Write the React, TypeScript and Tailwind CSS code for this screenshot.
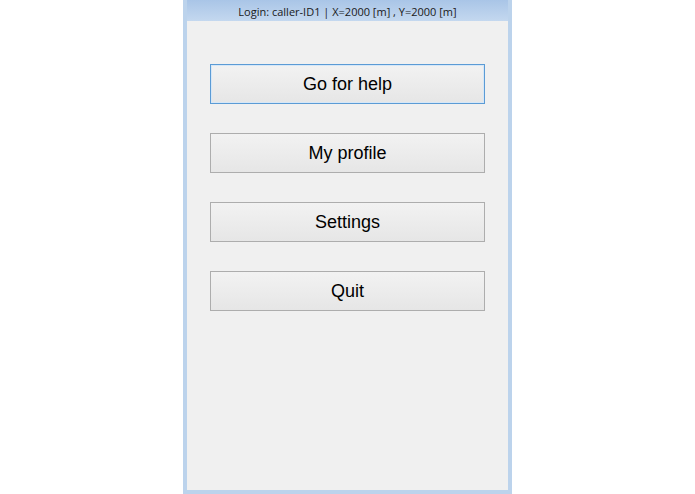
import React from 'react';

const MenuButton: React.FC<{ label: string; focused?: boolean }> = ({ label, focused }) => (
  <button
    className={`h-[40px] w-full border bg-gradient-to-b from-[#f2f2f2] to-[#e6e6e6] text-[18px] text-black ${
      focused ? 'border-[#5b9bd5] shadow-[inset_0_0_0_1px_#d6e7f7]' : 'border-[#adadad]'
    }`}
    style={{ fontFamily: '"Liberation Sans", Arial, sans-serif' }}
  >
    {label}
  </button>
);

export default function App() {
  const items = ['Go for help', 'My profile', 'Settings', 'Quit'];

  return (
    <div className="flex h-[494px] w-[695px] justify-center bg-white">
      <div className="flex w-[329px] flex-col bg-[#bcd3ec] px-[4px] pb-[4px]">
        {/* title bar */}
        <div
          className="h-[21px] bg-gradient-to-b from-[#a9c5e7] to-[#c4d8ef] pt-[5px] text-center text-[11px] leading-[14px] text-[#1a1a1a]"
          style={{ fontFamily: '"Open Sans", "Noto Sans", sans-serif' }}
        >
          Login: caller-ID1 | X=2000 [m] , Y=2000 [m]
        </div>

        {/* content */}
        <div className="flex flex-1 flex-col gap-[29px] bg-[#f0f0f0] pl-[23px] pr-[23px] pt-[43px]">
          {items.map((label, i) => (
            <MenuButton key={label} label={label} focused={i === 0} />
          ))}
        </div>
      </div>
    </div>
  );
}
